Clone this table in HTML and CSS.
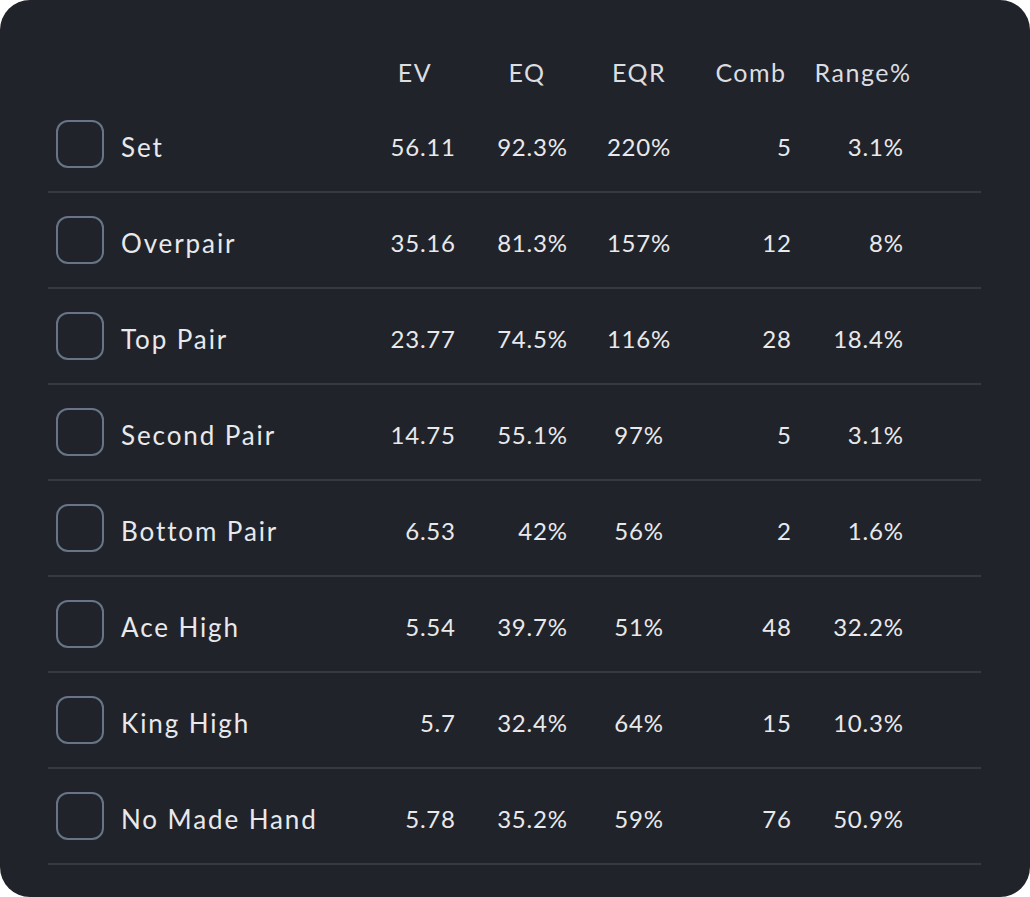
FILE: index.html
```html
<!DOCTYPE html>
<html>
<head>
<meta charset="utf-8">
<link rel="stylesheet" href="styles.css">
</head>
<body>
<div class="panel">
  <div class="row head">
    <div class="name"></div>
    <div class="c">EV</div>
    <div class="c">EQ</div>
    <div class="c">EQR</div>
    <div class="c">Comb</div>
    <div class="c">Range%</div>
  </div>
  <div class="row item"><div class="name"><span class="box"></span><span class="lbl">Set</span></div><div class="r">56.11</div><div class="r">92.3%</div><div class="m">220%</div><div class="r">5</div><div class="r">3.1%</div></div>
  <div class="row item"><div class="name"><span class="box"></span><span class="lbl">Overpair</span></div><div class="r">35.16</div><div class="r">81.3%</div><div class="m">157%</div><div class="r">12</div><div class="r">8%</div></div>
  <div class="row item"><div class="name"><span class="box"></span><span class="lbl">Top Pair</span></div><div class="r">23.77</div><div class="r">74.5%</div><div class="m">116%</div><div class="r">28</div><div class="r">18.4%</div></div>
  <div class="row item"><div class="name"><span class="box"></span><span class="lbl">Second Pair</span></div><div class="r">14.75</div><div class="r">55.1%</div><div class="m">97%</div><div class="r">5</div><div class="r">3.1%</div></div>
  <div class="row item"><div class="name"><span class="box"></span><span class="lbl">Bottom Pair</span></div><div class="r">6.53</div><div class="r">42%</div><div class="m">56%</div><div class="r">2</div><div class="r">1.6%</div></div>
  <div class="row item"><div class="name"><span class="box"></span><span class="lbl">Ace High</span></div><div class="r">5.54</div><div class="r">39.7%</div><div class="m">51%</div><div class="r">48</div><div class="r">32.2%</div></div>
  <div class="row item"><div class="name"><span class="box"></span><span class="lbl">King High</span></div><div class="r">5.7</div><div class="r">32.4%</div><div class="m">64%</div><div class="r">15</div><div class="r">10.3%</div></div>
  <div class="row item"><div class="name"><span class="box"></span><span class="lbl">No Made Hand</span></div><div class="r">5.78</div><div class="r">35.2%</div><div class="m">59%</div><div class="r">76</div><div class="r">50.9%</div></div>
</div>
</body>
</html>
```
FILE: styles.css
```css
html, body {
  margin: 0;
  padding: 0;
  background: #ffffff;
}
body {
  font-family: "Lato", "Noto Sans", sans-serif;
  color: #e9e9ec;
}
.panel {
  width: 1030px;
  height: 897px;
  box-sizing: border-box;
  background: #202329;
  border-radius: 30px;
  padding: 47px 49px 30px 48px;
}
.row {
  display: grid;
  grid-template-columns: 295px 80px 80px 80px 80px 80px;
  column-gap: 32px;
  align-items: center;
}
.head {
  height: 50px;
  font-size: 25px;
  color: #dcdde0;
  letter-spacing: 1.5px;
}
.head .c {
  white-space: nowrap;
  display: flex;
  justify-content: center;
}
.item {
  height: 94px;
  border-bottom: 2px solid #363940;
  font-size: 24px;
  letter-spacing: 0.8px;
}
.item .r, .item .m {
  padding-top: 4px;
}
.name {
  display: flex;
  align-items: center;
  gap: 17px;
  padding-left: 8px;
  font-size: 26px;
  letter-spacing: 1.9px;
  white-space: nowrap;
}
.lbl {
  padding-top: 5px;
}
.box {
  width: 48px;
  height: 48px;
  box-sizing: border-box;
  border: 2px solid #687587;
  border-radius: 12px;
  flex: none;
}
.r { text-align: right; white-space: nowrap; margin-right: -0.8px; }
.m { text-align: center; white-space: nowrap; }
```
